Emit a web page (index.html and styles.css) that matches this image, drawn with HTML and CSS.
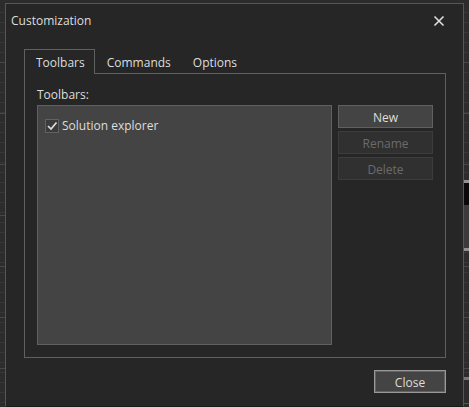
FILE: index.html
```html
<!DOCTYPE html>
<html lang="en">
<head>
<meta charset="utf-8">
<title>Customization</title>
<link rel="stylesheet" href="styles.css">
</head>
<body>
<div class="canvas-edge" aria-hidden="true">
  <span class="shape shape-upper"></span>
  <span class="shape shape-lower"></span>
</div>
<main class="dialog" role="dialog" aria-labelledby="dialog-title">
  <header class="titlebar">
    <h1 class="title" id="dialog-title">Customization</h1>
    <button class="dismiss" type="button" aria-label="Close dialog">
      <svg width="12" height="12" viewBox="0 0 12 12"><path d="M1.500 1.500l9 9M10.500 1.500l-9 9" fill="none" stroke="currentColor" stroke-width="1.600"/></svg>
    </button>
  </header>
  <div class="content">
    <div class="tabs" role="tablist">
      <button class="tab tab-active" type="button" role="tab" aria-selected="true">Toolbars</button>
      <button class="tab" type="button" role="tab" aria-selected="false">Commands</button>
      <button class="tab" type="button" role="tab" aria-selected="false">Options</button>
    </div>
    <section class="panel" role="tabpanel">
      <h2 class="label" id="list-label">Toolbars:</h2>
      <div class="columns">
        <div class="list" role="group" aria-labelledby="list-label">
          <label class="item">
            <input class="check" type="checkbox" checked>
            <svg class="tick" width="14" height="14" viewBox="0 0 14 14"><path d="M3 7l3 3 5.500-6.500" fill="none" stroke="currentColor" stroke-width="1.700"/></svg>
            <span>Solution explorer</span>
          </label>
        </div>
        <div class="actions">
          <button class="button" type="button">New</button>
          <button class="button" type="button" disabled>Rename</button>
          <button class="button" type="button" disabled>Delete</button>
        </div>
      </div>
    </section>
    <footer class="footer">
      <button class="button button-default" type="button">Close</button>
    </footer>
  </div>
</main>
</body>
</html>
```
FILE: styles.css
```css
* {
  box-sizing: border-box;
}

body {
  position: relative;
  display: flex;
  min-height: 100vh;
  margin: 0;
  padding: 3px 5px 0;
  background-color: #2c2c2c;
  background-image:
    repeating-linear-gradient(transparent 0 50px, #484848 50px 51px),
    repeating-linear-gradient(transparent 0 9px, #373737 9px 10px);
  background-position: 0 12px, 0 3px;
  color: #dedede;
  font: 12px/16px "Open Sans", "Noto Sans", sans-serif;
}

button {
  font: inherit;
  color: inherit;
}

/* Shapes of the drawing canvas that show beside the dialog */
.canvas-edge {
  position: absolute;
  inset: 0 0 0 auto;
  width: 6px;
}

.shape {
  position: absolute;
  left: 0;
  right: 0;
}

.shape-upper {
  top: 180px;
  height: 71px;
  border-top: 3px solid #929292;
  border-bottom: 3px solid #929292;
  background: linear-gradient(#090909 0 22px, #3b3b3b 22px);
}

.shape-lower {
  top: 377px;
  height: 27px;
  border-top: 3px solid #777777;
  border-bottom: 1px solid #555555;
  background: #2c2c2c;
}

.dialog {
  position: relative;
  display: flex;
  flex: 1;
  flex-direction: column;
  border: 1px solid #565656;
  border-bottom-color: #191919;
  background: #262626;
}

.titlebar {
  display: flex;
  align-items: center;
  justify-content: space-between;
  height: 34px;
  padding: 0 18px 0 5px;
}

.title,
.label {
  margin: 0;
  font-size: 12px;
  font-weight: 400;
}

.dismiss {
  display: flex;
  padding: 0;
  border: 0;
  background: none;
}

.content {
  display: flex;
  flex: 1;
  flex-direction: column;
  padding: 11px 17px 13px 18px;
}

.tabs {
  display: flex;
}

.tab {
  height: 24px;
  padding: 2px 9px 0 11px;
  border: 1px solid transparent;
  border-bottom: 0;
  background: none;
}

.tab-active {
  position: relative;
  margin-bottom: -1px;
  height: 25px;
  border-color: #606060;
  background: #262626;
}

.panel {
  display: flex;
  flex: 1;
  flex-direction: column;
  gap: 2px;
  padding: 13px 12px 12px;
  border: 1px solid #606060;
}

.columns {
  display: flex;
  flex: 1;
  gap: 6px;
}

.list {
  flex: 1;
  padding: 12px 7px;
  border: 1px solid #606060;
  background: #444444;
}

.item {
  display: grid;
  grid-template-columns: 14px 1fr;
  align-items: center;
  gap: 3px;
}

.check {
  grid-area: 1 / 1;
  width: 14px;
  height: 14px;
  margin: 0;
  border: 1px solid #626262;
  background: #3b3b3b;
  appearance: none;
}

.tick {
  grid-area: 1 / 1;
  visibility: hidden;
  pointer-events: none;
}

.check:checked + .tick {
  visibility: visible;
}

.actions {
  display: flex;
  flex-direction: column;
  gap: 3px;
  width: 95px;
}

.button {
  height: 23px;
  padding: 2px 0 0;
  border: 1px solid #606060;
  background: #444444;
}

.button:disabled {
  border-color: #3c3c3c;
  background: #303030;
  color: #6b6b6b;
}

.footer {
  display: flex;
  justify-content: flex-end;
  padding-top: 12px;
}

.button-default {
  width: 72px;
  border-color: #999999;
  box-shadow: inset 0 0 0 1px #626262;
}
```
